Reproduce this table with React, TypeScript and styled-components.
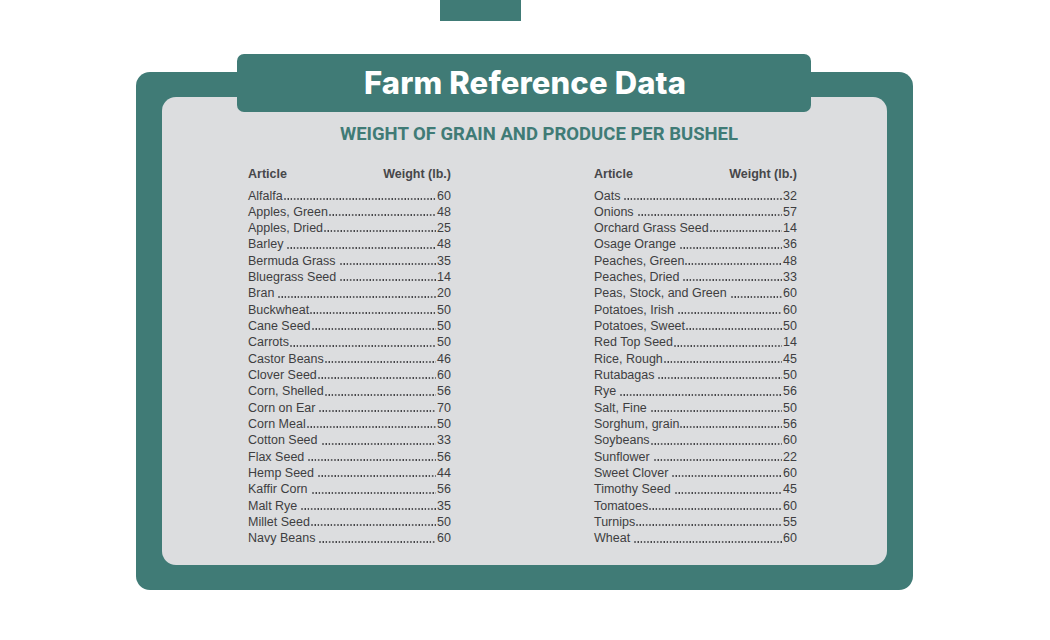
import React from "react";
import styled, { createGlobalStyle } from "styled-components";

const TEAL = "#407b76";
const INK = "#3e3e41";

const Global = createGlobalStyle`
  html, body { margin: 0; padding: 0; background: #ffffff; }
  body { font-family: "Liberation Sans", Arial, sans-serif; }
`;

const Page = styled.div`
  width: 1050px;
  height: 640px;
  display: flex;
  flex-direction: column;
  overflow: hidden;
`;

const TopBar = styled.div`
  margin-left: 440px;
  width: 81px;
  height: 21px;
  background: ${TEAL};
`;

const Frame = styled.div`
  position: relative;
  margin: 51px 0 0 136px;
  width: 777px;
  height: 518px;
  box-sizing: border-box;
  padding: 25px 26px;
  background: ${TEAL};
  border-radius: 14px;
`;

const Tab = styled.div`
  position: absolute;
  left: 101px;
  top: -18px;
  width: 574px;
  height: 58px;
  background: ${TEAL};
  border-radius: 7px;
  display: flex;
  align-items: center;
  justify-content: center;
  z-index: 2;
`;

const Title = styled.h1`
  margin: 0;
  color: #ffffff;
  font-family: "Inter", "Lato", sans-serif;
  font-weight: 800;
  font-size: 31px;
  letter-spacing: 0.15px;
  line-height: 1;
  padding: 0 0 1px 2px;
`;

const Panel = styled.div`
  height: 100%;
  box-sizing: border-box;
  background: #dcdddf;
  border-radius: 14px;
  padding: 27px 0 0 0;
  display: flex;
  flex-direction: column;
`;

const Subtitle = styled.h2`
  margin: 0;
  text-align: center;
  color: ${TEAL};
  font-family: "Roboto", "Liberation Sans", Arial, sans-serif;
  font-weight: 700;
  font-size: 18.5px;
  line-height: 20px;
  padding-left: 29px;
`;

const Columns = styled.div`
  display: grid;
  grid-template-columns: 203px 203px;
  column-gap: 143px;
  padding-left: 86px;
  margin-top: 22px;
`;

const Column = styled.div`
  display: flex;
  flex-direction: column;
`;

const HeaderRow = styled.div`
  display: flex;
  justify-content: space-between;
  font-weight: 700;
  font-size: 12.5px;
  line-height: 16px;
  color: #47474a;
  margin-bottom: 5.5px;
`;

const Row = styled.div`
  display: flex;
  font-size: 12.5px;
  line-height: 16.33px;
  color: ${INK};
  white-space: nowrap;
`;

const Label = styled.span<{ $gap: boolean }>`
  flex: none;
  margin-right: ${(p) => (p.$gap ? "4px" : "1px")};
`;

const Leader = styled.span`
  flex: 1;
  min-width: 0;
  margin-right: 1px;
  background-image: radial-gradient(circle at 1px 1px, ${INK} 0.65px, transparent 0.95px);
  background-size: 3.25px 2px;
  background-repeat: repeat-x;
  background-position: 0 10.3px;
`;

const Value = styled.span`
  flex: none;
`;

const left: [string, string][] = [
  ["Alfalfa", "60"],
  ["Apples, Green", "48"],
  ["Apples, Dried", "25"],
  ["Barley ", "48"],
  ["Bermuda Grass ", "35"],
  ["Bluegrass Seed ", "14"],
  ["Bran ", "20"],
  ["Buckwheat", "50"],
  ["Cane Seed", "50"],
  ["Carrots", "50"],
  ["Castor Beans", "46"],
  ["Clover Seed", "60"],
  ["Corn, Shelled", "56"],
  ["Corn on Ear ", "70"],
  ["Corn Meal", "50"],
  ["Cotton Seed ", "33"],
  ["Flax Seed ", "56"],
  ["Hemp Seed ", "44"],
  ["Kaffir Corn ", "56"],
  ["Malt Rye ", "35"],
  ["Millet Seed", "50"],
  ["Navy Beans ", "60"],
];

const right: [string, string][] = [
  ["Oats ", "32"],
  ["Onions ", "57"],
  ["Orchard Grass Seed", "14"],
  ["Osage Orange ", "36"],
  ["Peaches, Green", "48"],
  ["Peaches, Dried ", "33"],
  ["Peas, Stock, and Green ", "60"],
  ["Potatoes, Irish ", "60"],
  ["Potatoes, Sweet", "50"],
  ["Red Top Seed", "14"],
  ["Rice, Rough", "45"],
  ["Rutabagas ", "50"],
  ["Rye ", "56"],
  ["Salt, Fine ", "50"],
  ["Sorghum, grain", "56"],
  ["Soybeans", "60"],
  ["Sunflower ", "22"],
  ["Sweet Clover ", "60"],
  ["Timothy Seed ", "45"],
  ["Tomatoes", "60"],
  ["Turnips", "55"],
  ["Wheat ", "60"],
];

function Table({ rows }: { rows: [string, string][] }) {
  return (
    <Column>
      <HeaderRow>
        <span>Article</span>
        <span>Weight (lb.)</span>
      </HeaderRow>
      {rows.map(([name, w]) => (
        <Row key={name}>
          <Label $gap={name.endsWith(" ")}>{name.trim()}</Label>
          <Leader />
          <Value>{w}</Value>
        </Row>
      ))}
    </Column>
  );
}

export default function App() {
  return (
    <Page>
      <Global />
      <TopBar />
      <Frame>
        <Tab>
          <Title>Farm Reference Data</Title>
        </Tab>
        <Panel>
          <Subtitle>WEIGHT OF GRAIN AND PRODUCE PER BUSHEL</Subtitle>
          <Columns>
            <Table rows={left} />
            <Table rows={right} />
          </Columns>
        </Panel>
      </Frame>
    </Page>
  );
}
